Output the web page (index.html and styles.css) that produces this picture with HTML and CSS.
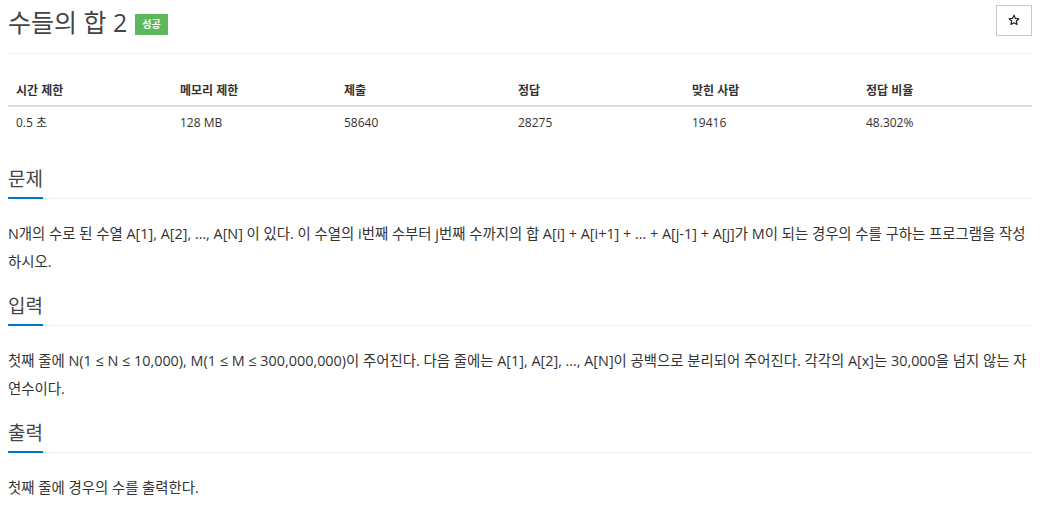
FILE: index.html
```html
<!DOCTYPE html>
<html lang="ko">
<head>
<meta charset="utf-8">
<link rel="stylesheet" href="styles.css">
</head>
<body>
<div class="page">
  <div class="page-header">
    <h1 class="title">수들의 합 2<span class="badge">성공</span></h1>
    <button class="star" type="button" aria-label="즐겨찾기">
      <svg width="12" height="12" viewBox="0 0 24 24" aria-hidden="true"><path d="M12 2.5l2.9 6.3 6.8.7-5.1 4.6 1.5 6.8L12 17.4l-6.1 3.5 1.5-6.8-5.1-4.6 6.8-.7z" fill="none" stroke="#222" stroke-width="2.4" stroke-linejoin="round"/></svg>
    </button>
  </div>

  <table class="info">
    <thead>
      <tr>
        <th class="c1">시간 제한</th>
        <th class="c2">메모리 제한</th>
        <th class="c3">제출</th>
        <th class="c4">정답</th>
        <th class="c5">맞힌 사람</th>
        <th class="c6">정답 비율</th>
      </tr>
    </thead>
    <tbody>
      <tr>
        <td>0.5 초</td>
        <td>128 MB</td>
        <td>58640</td>
        <td>28275</td>
        <td>19416</td>
        <td>48.302%</td>
      </tr>
    </tbody>
  </table>

  <section class="section">
    <div class="headline"><h2><span>문제</span></h2></div>
    <p class="text">N개의 수로 된 수열 A[1], A[2], …, A[N] 이 있다. 이 수열의 i번째 수부터 j번째 수까지의 합 A[i] + A[i+1] + … + A[j-1] + A[j]가 M이 되는 경우의 수를 구하는 프로그램을 작성하시오.</p>
  </section>

  <section class="section">
    <div class="headline"><h2><span>입력</span></h2></div>
    <p class="text">첫째 줄에 N(1 ≤ N ≤ 10,000), M(1 ≤ M ≤ 300,000,000)이 주어진다. 다음 줄에는 A[1], A[2], …, A[N]이 공백으로 분리되어 주어진다. 각각의 A[x]는 30,000을 넘지 않는 자연수이다.</p>
  </section>

  <section class="section">
    <div class="headline"><h2><span>출력</span></h2></div>
    <p class="text">첫째 줄에 경우의 수를 출력한다.</p>
  </section>
</div>
</body>
</html>
```

FILE: styles.css
```css
html, body {
  margin: 0;
  padding: 0;
  background: #fff;
}

body {
  font-family: "Open Sans", "Noto Sans CJK KR", sans-serif;
  color: #333;
}

.page {
  padding: 0 8px;
}

.page-header {
  display: flex;
  justify-content: space-between;
  align-items: flex-start;
  border-bottom: 1px solid #eee;
  height: 54px;
  box-sizing: border-box;
}

.title {
  margin: 5px 0 0;
  font-size: 25px;
  font-weight: 400;
  line-height: 34px;
  color: #444;
  display: flex;
  align-items: center;
}

.badge {
  display: inline-block;
  margin-left: 8px;
  background: #5cb85c;
  color: #fff;
  font-size: 10px;
  font-weight: 700;
  line-height: 21px;
  height: 21px;
  padding: 0 7px;
  margin-top: 4px;
}

.star {
  margin-top: 5px;
  width: 36px;
  height: 31px;
  border: 1px solid #c8c8c8;
  background: #fff;
  padding: 0;
  display: flex;
  align-items: center;
  justify-content: center;
}

.star svg {
  display: block;
  margin-top: -1px;
}

.info {
  width: 100%;
  table-layout: fixed;
  border-collapse: collapse;
  margin-top: 18px;
  font-size: 12px;
}

.info th, .info td {
  text-align: left;
  padding: 0 8px;
  line-height: 17px;
}

.info th {
  font-weight: 700;
  padding-top: 10px;
  padding-bottom: 6px;
  border-bottom: 2px solid #ddd;
}

.info td {
  padding-top: 7px;
  padding-bottom: 8px;
}

.info .c1, .info .c2 { width: 148px; }
.info .c3, .info .c4, .info .c5 { width: 158px; }

.section {
  margin-top: 17px;
}

.section:first-of-type {
  margin-top: 27px;
}

.headline h2 {
  margin: 0;
  font-size: 19px;
  font-weight: 400;
  line-height: 26px;
  border-bottom: 1px dotted #ddd;
  color: #444;
}

.headline h2 span {
  display: inline-block;
  border-bottom: 2px solid #0076c0;
  margin-bottom: -1px;
  padding-bottom: 5px;
}

.text {
  margin: 21px 0 0;
  font-size: 14.4px;
  line-height: 28px;
  color: #333;
}
```
